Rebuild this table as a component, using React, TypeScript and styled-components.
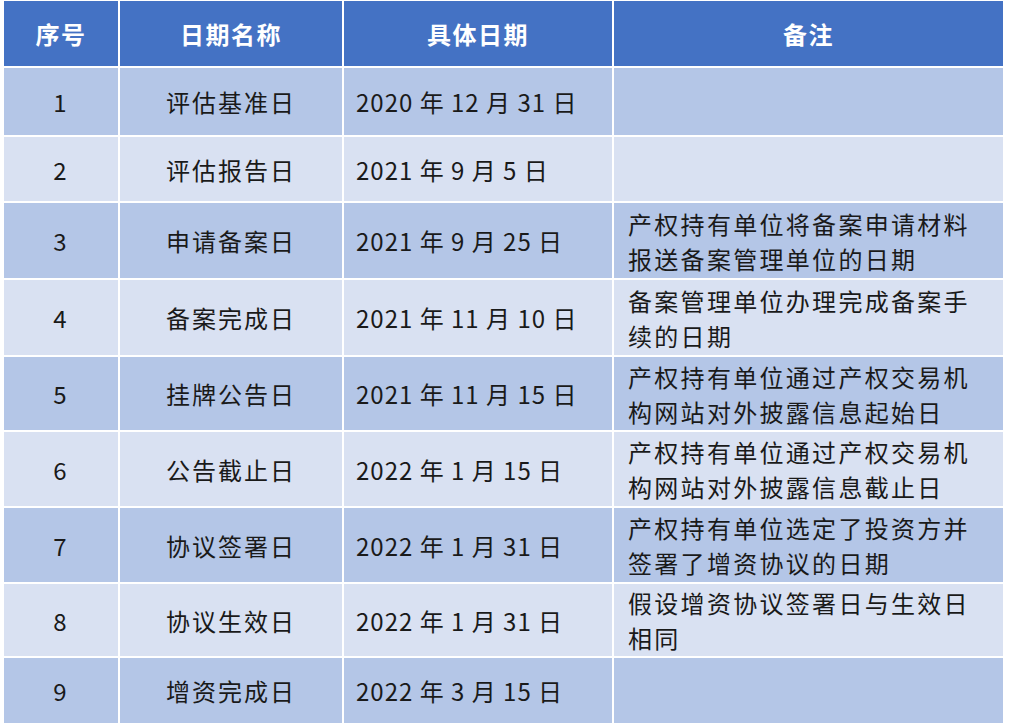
import React from 'react';
import styled, { createGlobalStyle } from 'styled-components';

const GlobalStyle = createGlobalStyle`
  html, body {
    margin: 0;
    padding: 0;
    background: #ffffff;
  }
  body {
    font-family: "Noto Sans CJK SC", "Noto Sans", sans-serif;
  }
`;

const Page = styled.div`
  width: 1012px;
  height: 728px;
  overflow: hidden;
  padding: 0 0 0 2px;
  box-sizing: border-box;
  margin-top: -1px;
`;

const Table = styled.table`
  border-collapse: separate;
  border-spacing: 2px;
  table-layout: fixed;
  width: 1003px;
  color: #1a1a1a;
  font-size: 24px;
  letter-spacing: 2px;
`;

const HeadCell = styled.th<{ $w: number }>`
  width: ${p => p.$w}px;
  height: 65px;
  padding: 0;
  background: #4472c4;
  color: #ffffff;
  font-weight: 700;
  letter-spacing: 1.5px;
  text-align: center;
  vertical-align: middle;
`;

const Row = styled.tr<{ $alt: boolean; $h: number }>`
  height: ${p => p.$h}px;
  background: ${p => (p.$alt ? '#d9e1f2' : '#b4c6e7')};
`;

const Cell = styled.td`
  padding: 0;
  text-align: center;
  vertical-align: middle;
  line-height: 35px;
  font-weight: 400;
  overflow: hidden;
`;

const DateCell = styled.td`
  padding: 0 0 0 12px;
  text-align: left;
  vertical-align: middle;
  line-height: 35px;
  letter-spacing: 1px;
  white-space: nowrap;
  overflow: hidden;
`;

const Note = styled.td`
  padding: 0 6px 0 14px;
  text-align: left;
  vertical-align: middle;
  line-height: 35px;
  letter-spacing: 2.3px;
  white-space: nowrap;
  overflow: hidden;
`;

const rows = [
  { no: 1, name: '评估基准日', date: '2020 年 12 月 31 日', note: [], h: 67 },
  { no: 2, name: '评估报告日', date: '2021 年 9 月 5 日', note: [], h: 64 },
  { no: 3, name: '申请备案日', date: '2021 年 9 月 25 日', note: ['产权持有单位将备案申请材料', '报送备案管理单位的日期'], h: 75 },
  { no: 4, name: '备案完成日', date: '2021 年 11 月 10 日', note: ['备案管理单位办理完成备案手', '续的日期'], h: 75 },
  { no: 5, name: '挂牌公告日', date: '2021 年 11 月 15 日', note: ['产权持有单位通过产权交易机', '构网站对外披露信息起始日'], h: 73 },
  { no: 6, name: '公告截止日', date: '2022 年 1 月 15 日', note: ['产权持有单位通过产权交易机', '构网站对外披露信息截止日'], h: 74 },
  { no: 7, name: '协议签署日', date: '2022 年 1 月 31 日', note: ['产权持有单位选定了投资方并', '签署了增资协议的日期'], h: 74 },
  { no: 8, name: '协议生效日', date: '2022 年 1 月 31 日', note: ['假设增资协议签署日与生效日', '相同'], h: 72 },
  { no: 9, name: '增资完成日', date: '2022 年 3 月 15 日', note: [], h: 65 },
];

export default function App() {
  return (
    <Page>
      <GlobalStyle />
      <Table>
        <thead>
          <tr>
            <HeadCell $w={114}>序号</HeadCell>
            <HeadCell $w={222}>日期名称</HeadCell>
            <HeadCell $w={268}>具体日期</HeadCell>
            <HeadCell $w={389}>备注</HeadCell>
          </tr>
        </thead>
        <tbody>
          {rows.map((r, i) => (
            <Row key={r.no} $alt={i % 2 === 1} $h={r.h}>
              <Cell>{r.no}</Cell>
              <Cell>{r.name}</Cell>
              <DateCell>{r.date}</DateCell>
              <Note>
                {r.note.map((line, j) => (
                  <div key={j}>{line}</div>
                ))}
              </Note>
            </Row>
          ))}
        </tbody>
      </Table>
    </Page>
  );
}
